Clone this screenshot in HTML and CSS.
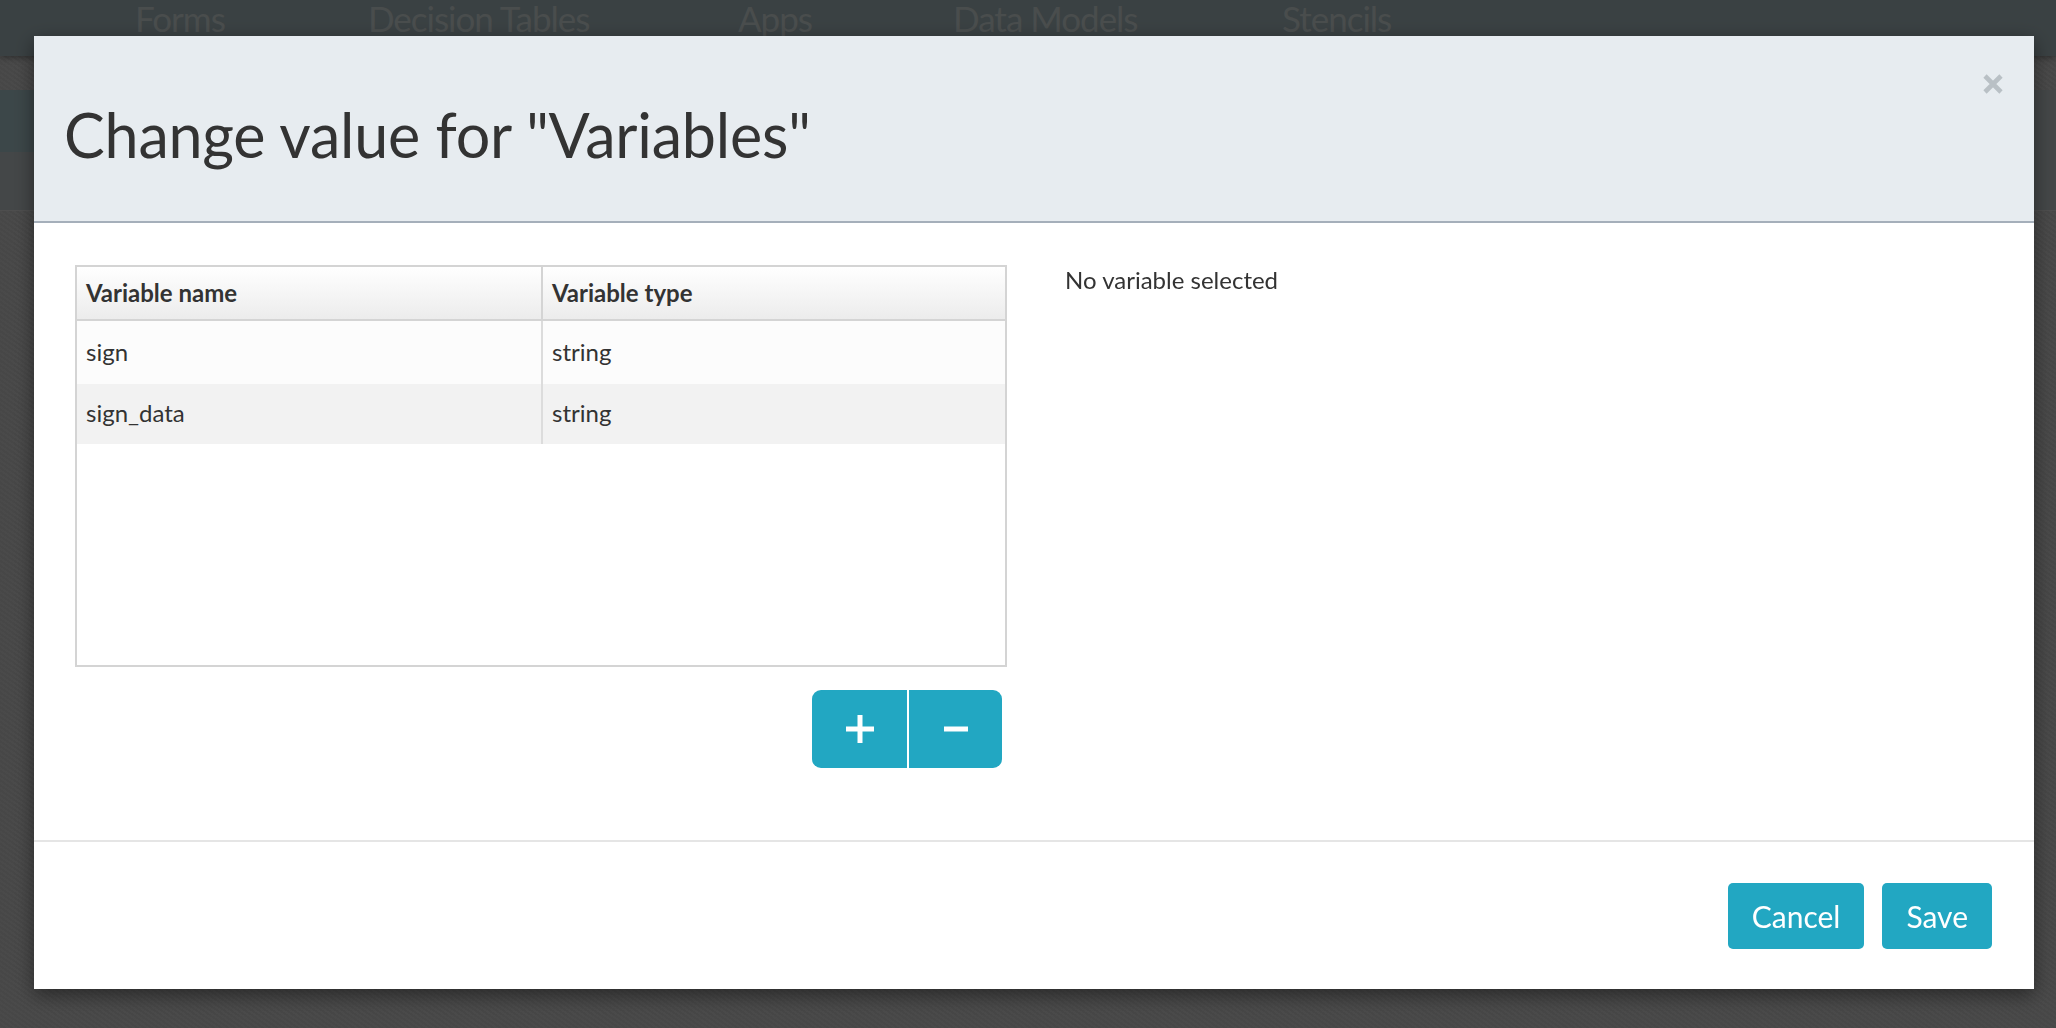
FILE: index.html
```html
<!DOCTYPE html>
<html lang="en">
<head>
<meta charset="utf-8">
<title>Change value for "Variables"</title>
<link rel="stylesheet" href="styles.css">
</head>
<body>
<div class="app">
  <nav class="topnav">
    <span class="nav-item nav-forms">Forms</span>
    <span class="nav-item nav-dt">Decision Tables</span>
    <span class="nav-item nav-apps">Apps</span>
    <span class="nav-item nav-dm">Data Models</span>
    <span class="nav-item nav-st">Stencils</span>
  </nav>
  <div class="subbar"><div class="subbtn"></div></div>
</div>

<div class="overlay">
  <div class="modal">
    <div class="modal-header">
      <h1 class="modal-title">Change value for "Variables"</h1>
      <button class="close" aria-label="Close">
        <svg width="20" height="20" viewBox="0 0 20 20"><path d="M2 2 L18 18 M18 2 L2 18" stroke="#b9c0c5" stroke-width="4.6" stroke-linecap="butt"/></svg>
      </button>
    </div>
    <div class="modal-body">
      <div class="left-col">
        <div class="grid">
          <div class="grid-head">
            <div class="cell head-cell">Variable name</div>
            <div class="cell head-cell">Variable type</div>
          </div>
          <div class="grid-row odd">
            <div class="cell">sign</div>
            <div class="cell">string</div>
          </div>
          <div class="grid-row even">
            <div class="cell">sign_data</div>
            <div class="cell">string</div>
          </div>
        </div>
        <div class="grid-actions">
          <div class="btn-group">
            <button class="btn-icon">
              <svg width="28" height="28" viewBox="0 0 28 28"><rect x="11.5" y="0" width="5" height="28" fill="#fff"/><rect x="0" y="11.5" width="28" height="5" fill="#fff"/></svg>
            </button>
            <button class="btn-icon">
              <svg width="24" height="6" viewBox="0 0 24 6"><rect x="0" y="0.5" width="24" height="5" fill="#fff"/></svg>
            </button>
          </div>
        </div>
      </div>
      <div class="right-col">
        <p class="empty-msg">No variable selected</p>
      </div>
    </div>
    <div class="modal-footer">
      <button class="btn">Cancel</button>
      <button class="btn">Save</button>
    </div>
  </div>
</div>
</body>
</html>
```

FILE: styles.css
```css
html, body {
  margin: 0;
  padding: 0;
  height: 100%;
}
body {
  background: #4a4a4a;
  font-family: Lato, "Open Sans", "Liberation Sans", sans-serif;
  color: #333;
  overflow: hidden;
}
.app {
  height: 100%;
  background:
    repeating-linear-gradient(35deg, rgba(255,255,255,0.015) 0 2px, rgba(0,0,0,0.02) 2px 4px),
    #4b4b4b;
}
.topnav {
  height: 56px;
  background: #3d4446;
  display: flex;
  align-items: flex-start;
  font-size: 35px;
  color: #4d5151;
  box-shadow: 0 2px 6px rgba(0,0,0,0.35);
  padding-left: 135px;
}
.nav-item {
  display: block;
  flex: none;
  margin-top: -3px;
  letter-spacing: -1px;
  white-space: nowrap;
}
.nav-forms { width: 233px; }
.nav-dt { width: 370px; }
.nav-apps { width: 215px; }
.nav-dm { width: 329px; }
.subbar {
  height: 120px;
  background: #474a4b;
  border-bottom: 1px solid #525252;
}
.subbtn {
  width: 60px;
  height: 62px;
  margin-top: 34px;
  background: #3f4a4c;
}

.overlay {
  position: fixed;
  inset: 0;
  background: rgba(0,0,0,0.04);
  padding: 36px 22px 0 34px;
}
.modal {
  width: 2000px;
  height: 953px;
  background: #fff;
  display: flex;
  flex-direction: column;
  box-shadow: 0 6px 18px rgba(0,0,0,0.45);
}
.modal-header {
  height: 185px;
  flex: none;
  background: #e7ecf0;
  border-bottom: 2px solid #a5afba;
  display: flex;
  justify-content: space-between;
  align-items: flex-start;
  padding: 0 32px 0 30px;
}
.modal-title {
  margin: 0;
  padding-top: 64px;
  font-size: 61px;
  font-weight: 400;
  line-height: 70px;
  color: #333;
  letter-spacing: -0.2px;
}
.close {
  background: none;
  border: 0;
  padding: 0;
  margin-top: 38px;
  margin-right: -1px;
  width: 20px;
  height: 20px;
  cursor: pointer;
}
.close svg { display: block; }

.modal-body {
  height: 619px;
  flex: none;
  display: flex;
  padding: 42px 41px 0 41px;
  box-sizing: border-box;
  border-bottom: 2px solid #e5e5e5;
  gap: 58px;
}
.left-col {
  width: 932px;
  flex: none;
}
.grid {
  height: 402px;
  border: 2px solid #d4d4d4;
  box-sizing: border-box;
  background: #fff;
}
.grid-head {
  display: flex;
  height: 52px;
  background: linear-gradient(#ffffff, #ececec);
  border-bottom: 2px solid #d4d4d4;
}
.grid-row {
  display: flex;
  height: 60px;
}
.grid-row.odd { background: #fcfcfc; height: 63px; }
.grid-row.even { background: #f2f2f2; }
.cell {
  width: 464px;
  flex: none;
  box-sizing: border-box;
  padding-left: 9px;
  padding-bottom: 3px;
  display: flex;
  align-items: center;
  font-size: 24px;
  color: #333;
}
.cell + .cell {
  border-left: 2px solid #d4d4d4;
  flex: 1;
}
.grid-row .cell + .cell { border-left-color: #dcdcdc; }
.head-cell {
  font-weight: 700;
  padding-bottom: 1px;
}
.grid-actions {
  display: flex;
  justify-content: flex-end;
  padding-right: 5px;
  margin-top: 23px;
}
.btn-group {
  display: flex;
  border-radius: 9px;
  overflow: hidden;
}
.btn-icon {
  width: 95px;
  height: 78px;
  border: 0;
  padding: 0;
  background: #22a7c2;
  display: flex;
  align-items: center;
  justify-content: center;
  cursor: pointer;
}
.btn-icon + .btn-icon { border-left: 2px solid #fff; width: 95px; }
.right-col {
  flex: 1;
}
.empty-msg {
  margin: 0;
  padding-top: 1px;
  font-size: 24px;
  line-height: 28px;
  color: #333;
}

.modal-footer {
  flex: 1;
  display: flex;
  justify-content: flex-end;
  align-items: flex-start;
  gap: 18px;
  padding: 41px 42px 0 0;
}
.btn {
  height: 66px;
  padding: 0 24px;
  border: 0;
  border-radius: 5px;
  background: #22a7c2;
  color: #fff;
  font-family: Lato, "Open Sans", "Liberation Sans", sans-serif;
  font-size: 30px;
  cursor: pointer;
}
```
